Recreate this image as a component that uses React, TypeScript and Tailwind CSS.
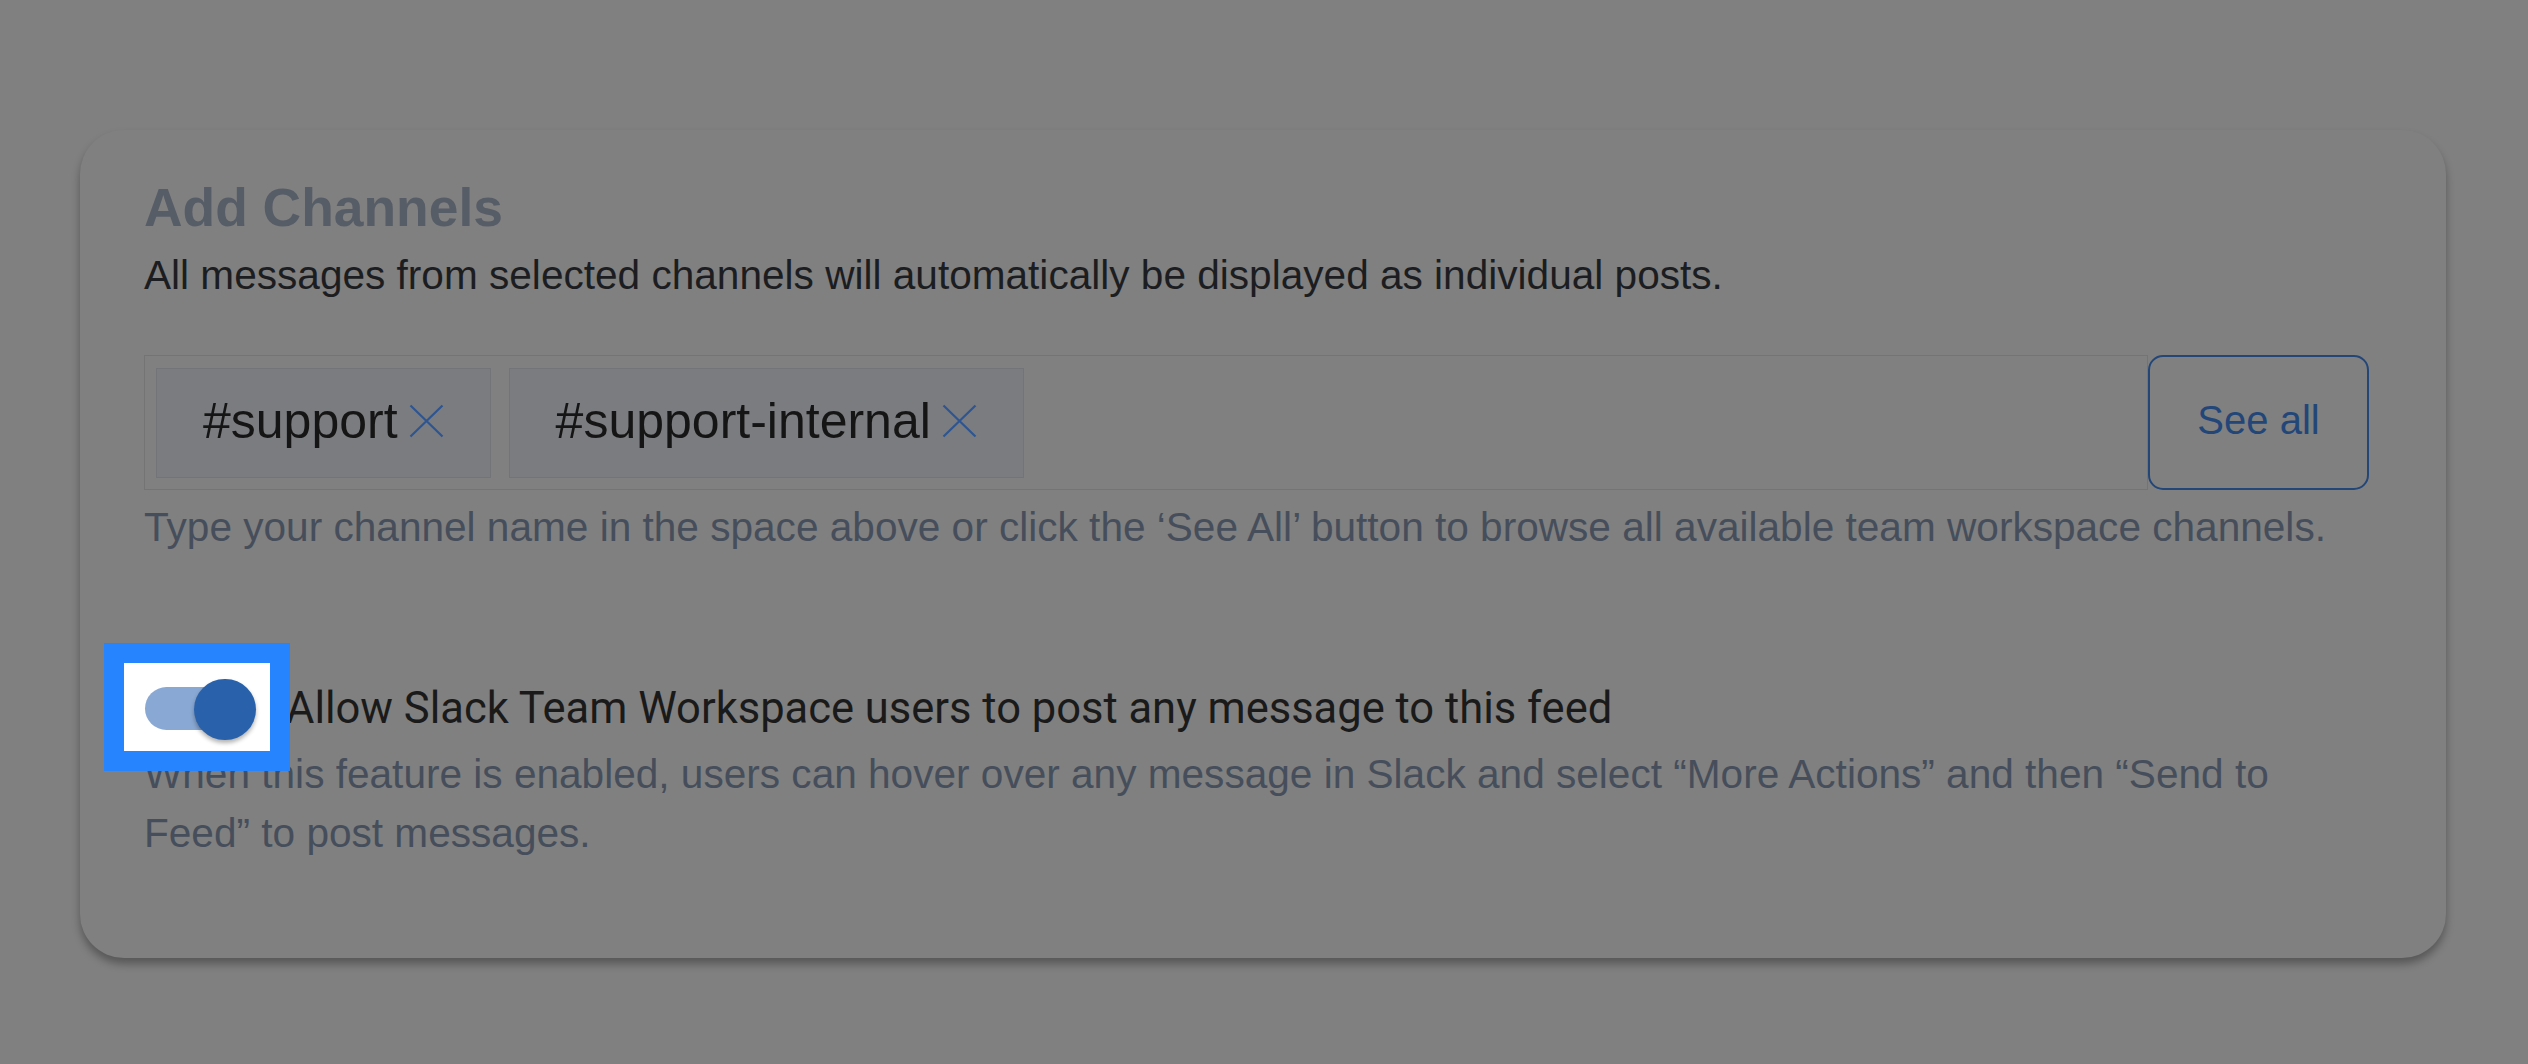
import React from "react";

function XIcon() {
  return (
    <svg width="35" height="34" viewBox="0 0 35 34" fill="none" className="shrink-0">
      <path d="M1.5 1.5 L33.5 32.5 M33.5 1.5 L1.5 32.5" stroke="#2d5592" strokeWidth="2.2" strokeLinecap="butt" />
    </svg>
  );
}

function Chip({ label }: { label: string }) {
  return (
    <div className="flex h-[110px] shrink-0 items-center gap-[11px] border border-[#737477] bg-[#7b7c7f] px-[46px] pb-[3px] text-[50px] leading-[50px] text-[#151515]">
      <span>{label}</span>
      <XIcon />
    </div>
  );
}

export default function App() {
  return (
    <div className="min-h-screen w-full bg-[#808080] pt-[130px] pl-[80px] pr-[82px] pb-[100px]">
      <div className="rounded-[44px] bg-[#808080] pl-[64px] pr-[77px] pt-[48px] pb-[95px] font-['Liberation_Sans',Arial,sans-serif] shadow-[0_6px_9px_rgba(0,0,0,0.32)]">
        <h2 className="text-[53.4px] font-bold leading-[60px] text-[#575d67]">
          Add Channels
        </h2>
        <p className="mt-[13px] text-[40.6px] leading-[48px] text-[#1c1d21]">
          All messages from selected channels will automatically be displayed as individual posts.
        </p>

        <div className="mt-[56px] flex h-[135px]">
          <div className="flex flex-1 items-center gap-[18px] border border-[#747474] px-[11px]">
            <Chip label="#support" />
            <Chip label="#support-internal" />
          </div>
          <button className="h-full w-[221px] shrink-0 rounded-[15px] border-2 border-[#234679] pb-[5px] text-[40px] text-[#234679]">
            See all
          </button>
        </div>

        <p className="mt-[13px] text-[40.6px] leading-[48px] text-[#464e5b]">
          Type your channel name in the space above or click the ‘See All’ button to browse all available team workspace channels.
        </p>

        <div className="mt-[112px] -ml-[20px] flex items-start">
          <div className="relative z-10 h-[88px] w-[146px] shrink-0 bg-white shadow-[0_0_0_20px_#2684ff]">
            <div className="absolute left-[21px] top-[24px] h-[43px] w-[104px] rounded-full bg-[#89a8d3]" />
            <div className="absolute left-[70px] top-[16px] h-[61px] w-[62px] rounded-full bg-[#2962ab] shadow-[0_3px_4px_rgba(0,0,0,0.3)]" />
          </div>
          <span className="ml-[16px] mt-[22px] font-['Roboto',sans-serif] text-[43.5px] leading-[48px] text-[#1a1a1a]">
            Allow Slack Team Workspace users to post any message to this feed
          </span>
        </div>

        <p className="-mt-[6px] max-w-[2200px] text-[40.6px] leading-[59px] text-[#464e5b]">
          When this feature is enabled, users can hover over any message in Slack and select “More Actions” and then “Send to Feed” to post messages.
        </p>
      </div>
    </div>
  );
}
